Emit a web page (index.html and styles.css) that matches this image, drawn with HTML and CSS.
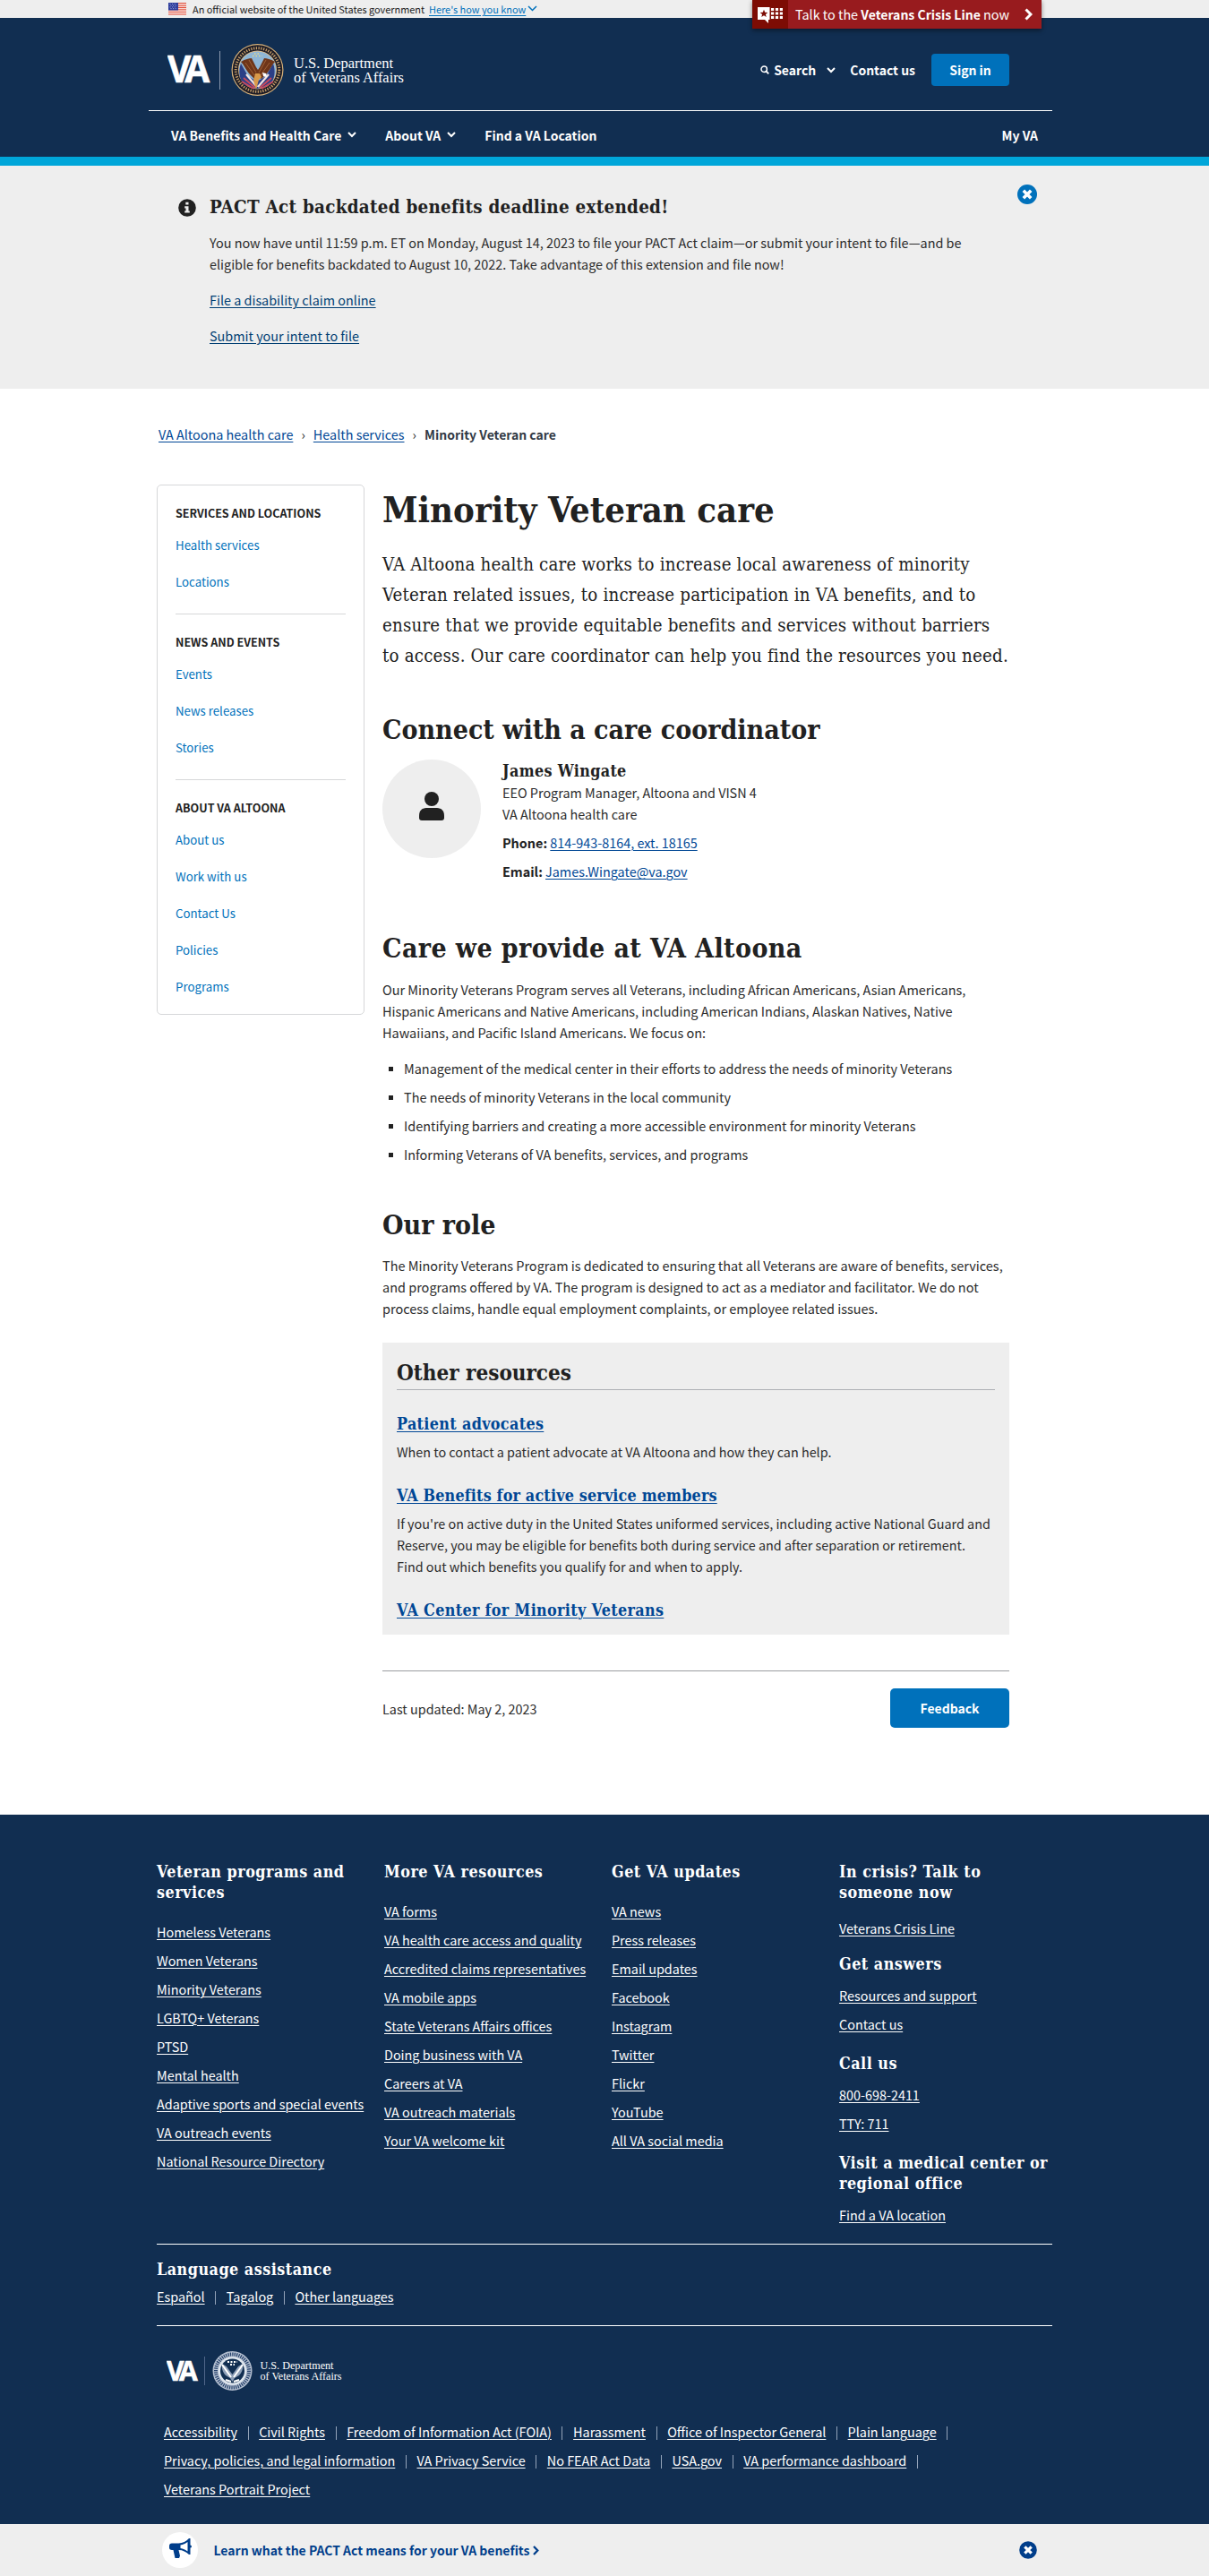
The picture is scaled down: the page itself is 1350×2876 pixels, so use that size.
FILE: index.html
```html
<!DOCTYPE html>
<html lang="en">
<head>
<meta charset="utf-8">
<title>Minority Veteran care | VA Altoona health care</title>
<link rel="stylesheet" href="styles.css">
</head>
<body>
<div class="gov-banner">
  <div class="gov-inner">
    <svg class="flag" width="20" height="14" viewBox="0 0 20 14"><rect width="20" height="14" fill="#fff"/><path d="M0 .7h20M0 3.1h20M0 5.5h20M0 7.9h20M0 10.3h20M0 12.9h20" stroke="#e0523e" stroke-width="1.3"/><rect width="11" height="8.5" fill="#2b3a9b"/><path d="M1.5 1.5h8M2.5 3.2h8M1.5 4.9h8M2.5 6.6h8" stroke="#c3c8ee" stroke-width=".8" stroke-dasharray="1 1.6"/></svg>
    <span class="gov-text">An official website of the United States government</span>
    <a class="gov-link" href="#">Here's how you know</a>
    <svg width="11" height="7" viewBox="0 0 11 7"><path d="M1 1l4.5 4.5L10 1" fill="none" stroke="#0071bb" stroke-width="1.5"/></svg>
  </div>
  <a class="crisis" href="#">
    <span class="crisis-icon">
      <svg width="28" height="18" viewBox="0 0 28 18"><path d="M0 0h13.500v14h-1.500v4l-4-4H0z" fill="#fff"/><path d="M7 2.800l1.200 2.900 3.100.2-2.400 2 .8 3L7 9.300l-2.700 1.600.8-3-2.400-2 3.100-.2z" fill="#7d0c04"/><path d="M15 2.500h13M15 7h13M15 11.500h13" stroke="#fff" stroke-width="3.200" stroke-dasharray="3.200 1.700"/></svg>
    </span>
    <span class="crisis-text">Talk to the <b>Veterans Crisis Line</b> now</span>
    <svg width="9" height="14" viewBox="0 0 9 14"><path d="M1.500 1.500L7 7l-5.500 5.500" fill="none" stroke="#fff" stroke-width="3"/></svg>
  </a>
</div>
<header class="header">
  <div class="header-top">
    <svg class="logo" width="266" height="60" viewBox="0 0 266 60">
      <text x="0" y="43.500" class="logo-va" font-size="40.500" letter-spacing="-7">VA</text>
      <path d="M58.500 9v43" stroke="#8c9bb0"/>
      <circle cx="100.500" cy="30" r="29" fill="#d8b27a"/><circle cx="100.500" cy="30" r="27.800" fill="#1d1c26"/>
      <circle cx="100.500" cy="30" r="24.300" fill="none" stroke="#c9a06a" stroke-width="3" stroke-dasharray="1.300 1.500"/>
      <circle cx="100.500" cy="30" r="21.500" fill="#d9b98a"/><circle cx="100.500" cy="30" r="20.600" fill="#8fb6d6"/>
      <path d="M82 23c-3 8-2 18 4 24l14 4 14-4c6-6 7-16 4-24l-8 14-10 6-10-6z" fill="#2c3f86"/>
      <path d="M85 39l13 11M83 43l13 8M116 39l-13 11M118 43l-13 8" stroke="#c94a5c" stroke-width="2"/>
      <path d="M88 35l12 14M113 35l-12 14" stroke="#f3e3df" stroke-width="2.200"/>
      <path d="M82 21c5-3 9-4 12-4l5 10 2 3 2-3 5-10c3 0 7 1 12 4-3 3-5 8-9 13l-6 6-4-2-4 2-6-6c-4-5-6-10-9-13z" fill="#6e3519"/>
      <path d="M87 22l10 14M91 19l8 14M114 22l-10 14M110 19l-8 14" stroke="#a5673b" stroke-width=".9"/>
      <path d="M98 34l5 0 2 4-3 3-3 11-3-10z" fill="#d99a4a"/>
      <path d="M106 33l4 1 1 4-4-1z" fill="#fff"/>
      <path d="M95 14.500h11M97 12h7" stroke="#e6d88a" stroke-width="1.600" stroke-dasharray="1.500 2"/>
      <text x="141" y="27.500" class="logo-name" font-size="16.500" textLength="111" lengthAdjust="spacingAndGlyphs">U.S. Department</text>
      <text x="141" y="44" class="logo-name" font-size="16.500" textLength="123" lengthAdjust="spacingAndGlyphs">of Veterans Affairs</text>
    </svg>
    <div class="header-tools">
      <svg width="10" height="10" viewBox="0 0 10 10"><circle cx="4.200" cy="4.200" r="3.200" fill="none" stroke="#fff" stroke-width="1.500"/><path d="M6.500 6.500L9.300 9.300" stroke="#fff" stroke-width="1.800"/></svg>
      <a class="search" href="#">Search</a>
      <svg class="tool-chev" width="10" height="7" viewBox="0 0 10 7"><path d="M1 1l4 4 4-4" fill="none" stroke="#fff" stroke-width="2"/></svg>
      <a class="contact" href="#">Contact us</a>
      <a class="sign-in" href="#">Sign in</a>
    </div>
  </div>
  <nav class="nav">
    <a href="#">VA Benefits and Health Care</a>
    <svg width="10" height="7" viewBox="0 0 10 7"><path d="M1 1l4 4 4-4" fill="none" stroke="#fff" stroke-width="2"/></svg>
    <a class="nav-about" href="#">About VA</a>
    <svg width="10" height="7" viewBox="0 0 10 7"><path d="M1 1l4 4 4-4" fill="none" stroke="#fff" stroke-width="2"/></svg>
    <a class="nav-find" href="#">Find a VA Location</a>
    <a class="nav-my" href="#">My VA</a>
  </nav>
</header>

<section class="alert">
  <svg class="alert-icon" width="20" height="20" viewBox="0 0 20 20"><circle cx="10" cy="10" r="9.800" fill="#212121"/><path d="M8.300 3.800h3.200v2.800H8.300zM7.200 8.200h4.300v5.200h1.300v2.200H7.200v-2.200h1.300v-3H7.200z" fill="#eee"/></svg>
  <div class="alert-body">
    <h2>PACT Act backdated benefits deadline extended!</h2>
    <p>You now have until 11:59 p.m. ET on Monday, August 14, 2023 to file your PACT Act claim—or submit your intent to file—and be eligible for benefits backdated to August 10, 2022. Take advantage of this extension and file now!</p>
    <p><a href="#">File a disability claim online</a></p>
    <p><a href="#">Submit your intent to file</a></p>
  </div>
  <svg class="alert-close" width="22" height="22" viewBox="0 0 22 22"><circle cx="11" cy="11" r="11" fill="#0071bb"/><path d="M6.800 6.800l8.400 8.400M15.200 6.800l-8.400 8.400" stroke="#fff" stroke-width="3.600"/></svg>
</section>

<div class="page">
  <nav class="crumbs"><a href="#">VA Altoona health care</a><i>›</i><a href="#">Health services</a><i>›</i><b>Minority Veteran care</b></nav>
  <div class="columns">
    <aside class="side">
      <h3>Services and locations</h3>
      <ul><li><a href="#">Health services</a></li><li><a href="#">Locations</a></li></ul>
      <h3>News and events</h3>
      <ul><li><a href="#">Events</a></li><li><a href="#">News releases</a></li><li><a href="#">Stories</a></li></ul>
      <h3>About VA Altoona</h3>
      <ul><li><a href="#">About us</a></li><li><a href="#">Work with us</a></li><li><a href="#">Contact Us</a></li><li><a href="#">Policies</a></li><li><a href="#">Programs</a></li></ul>
    </aside>
    <main class="content">
      <h1>Minority Veteran care</h1>
      <p class="intro">VA Altoona health care works to increase local awareness of minority Veteran related issues, to increase participation in VA benefits, and to ensure that we provide equitable benefits and services without barriers<br>to access. Our care coordinator can help you find the resources you need.</p>
      <h2 class="h-connect">Connect with a care coordinator</h2>
      <div class="person">
        <div class="avatar"><svg width="28" height="32" viewBox="0 0 28 32"><circle cx="14" cy="8" r="8" fill="#212121"/><path d="M8 18h12c5 0 8 3.500 8 8.500V29c0 2-1 3-3 3H3c-2 0-3-1-3-3v-2.500C0 21.500 3 18 8 18z" fill="#212121"/></svg></div>
        <div class="person-info">
          <h3 class="name">James Wingate</h3>
          <p>EEO Program Manager, Altoona and VISN 4</p>
          <p>VA Altoona health care</p>
          <p class="reach"><b>Phone:</b> <a href="#">814-943-8164, ext. 18165</a></p>
          <p class="reach"><b>Email:</b> <a href="#">James.Wingate@va.gov</a></p>
        </div>
      </div>
      <h2 class="h-care">Care we provide at VA Altoona</h2>
      <p class="copy">Our Minority Veterans Program serves all Veterans, including African Americans, Asian Americans, Hispanic Americans and Native Americans, including American Indians, Alaskan Natives, Native<br>Hawaiians, and Pacific Island Americans. We focus on:</p>
      <ul class="focus">
        <li>Management of the medical center in their efforts to address the needs of minority Veterans</li>
        <li>The needs of minority Veterans in the local community</li>
        <li>Identifying barriers and creating a more accessible environment for minority Veterans</li>
        <li>Informing Veterans of VA benefits, services, and programs</li>
      </ul>
      <h2 class="h-role">Our role</h2>
      <p class="copy">The Minority Veterans Program is dedicated to ensuring that all Veterans are aware of benefits, services, and programs offered by VA. The program is designed to act as a mediator and facilitator. We do not<br>process claims, handle equal employment complaints, or employee related issues.</p>
      <section class="resources">
        <h2>Other resources</h2>
        <h3><a href="#">Patient advocates</a></h3>
        <p>When to contact a patient advocate at VA Altoona and how they can help.</p>
        <h3 class="tight"><a href="#">VA Benefits for active service members</a></h3>
        <p>If you're on active duty in the United States uniformed services, including active National Guard and Reserve, you may be eligible for benefits both during service and after separation or retirement.<br>Find out which benefits you qualify for and when to apply.</p>
        <h3><a href="#">VA Center for Minority Veterans</a></h3>
      </section>
      <div class="updated"><span>Last updated: May 2, 2023</span><a class="feedback" href="#">Feedback</a></div>
    </main>
  </div>
</div>

<footer class="footer">
  <div class="footer-inner">
    <div class="footer-cols">
      <div><h3>Veteran programs and services</h3>
        <ul><li><a href="#">Homeless Veterans</a></li><li><a href="#">Women Veterans</a></li><li><a href="#">Minority Veterans</a></li><li><a href="#">LGBTQ+ Veterans</a></li><li><a href="#">PTSD</a></li><li><a href="#">Mental health</a></li><li><a href="#">Adaptive sports and special events</a></li><li><a href="#">VA outreach events</a></li><li><a href="#">National Resource Directory</a></li></ul></div>
      <div><h3>More VA resources</h3>
        <ul><li><a href="#">VA forms</a></li><li><a href="#">VA health care access and quality</a></li><li><a href="#">Accredited claims representatives</a></li><li><a href="#">VA mobile apps</a></li><li><a href="#">State Veterans Affairs offices</a></li><li><a href="#">Doing business with VA</a></li><li><a href="#">Careers at VA</a></li><li><a href="#">VA outreach materials</a></li><li><a href="#">Your VA welcome kit</a></li></ul></div>
      <div><h3>Get VA updates</h3>
        <ul><li><a href="#">VA news</a></li><li><a href="#">Press releases</a></li><li><a href="#">Email updates</a></li><li><a href="#">Facebook</a></li><li><a href="#">Instagram</a></li><li><a href="#">Twitter</a></li><li><a href="#">Flickr</a></li><li><a href="#">YouTube</a></li><li><a href="#">All VA social media</a></li></ul></div>
      <div class="help"><h3>In crisis? Talk to someone now</h3>
        <ul class="help-first"><li><a href="#">Veterans Crisis Line</a></li></ul>
        <h3>Get answers</h3>
        <ul><li><a href="#">Resources and support</a></li><li><a href="#">Contact us</a></li></ul>
        <h3>Call us</h3>
        <ul><li><a href="#">800-698-2411</a></li><li><a href="#">TTY: 711</a></li></ul>
        <h3>Visit a medical center or regional office</h3>
        <ul><li><a href="#">Find a VA location</a></li></ul></div>
    </div>
    <div class="language">
      <h3>Language assistance</h3>
      <ul class="piped"><li><a href="#">Español</a></li><li><a href="#">Tagalog</a></li><li><a href="#">Other languages</a></li></ul>
    </div>
    <svg class="footer-logo" width="200" height="46" viewBox="0 0 200 46">
      <text x="0" y="33.500" class="logo-va" font-size="30" letter-spacing="-5.400">VA</text>
      <path d="M42.500 7v32" stroke="#51678a"/>
      <circle cx="73.500" cy="23" r="22" fill="#b4bfd0"/><circle cx="73.500" cy="23" r="18.500" fill="none" stroke="#24406a" stroke-width="4" stroke-dasharray="1.200 1.200"/>
      <circle cx="73.500" cy="23" r="15.800" fill="#dfe6ee"/><circle cx="73.500" cy="23" r="13.500" fill="#112e51"/>
      <path d="M62 15l5 3 5 7 1.500 2 1.500-2 5-7 5-3c1 5-1 10-4 13l-5 3-2.500 4-2.500-4-5-3c-3-3-5-8-4-13z" fill="#8fa0b8"/>
      <path d="M62 16l10 14M85 16L75 30M66 33l6 2M81 33l-6 2" stroke="#fff" stroke-width="2"/>
      <path d="M68 13h11M71 16h5" stroke="#fff" stroke-width="2" stroke-dasharray="2 1.500"/>
      <text x="104.500" y="20.500" class="logo-name" font-size="12.300" textLength="82" lengthAdjust="spacingAndGlyphs">U.S. Department</text>
      <text x="104.500" y="33" class="logo-name" font-size="12.300" textLength="91" lengthAdjust="spacingAndGlyphs">of Veterans Affairs</text>
    </svg>
    <ul class="piped legal"><li><a href="#">Accessibility</a></li><li><a href="#">Civil Rights</a></li><li><a href="#">Freedom of Information Act (FOIA)</a></li><li><a href="#">Harassment</a></li><li><a href="#">Office of Inspector General</a></li><li><a href="#">Plain language</a></li><li><a href="#">Privacy, policies, and legal information</a></li><li><a href="#">VA Privacy Service</a></li><li><a href="#">No FEAR Act Data</a></li><li><a href="#">USA.gov</a></li><li><a href="#">VA performance dashboard</a></li><li><a href="#">Veterans Portrait Project</a></li></ul>
  </div>
</footer>
<div class="promo">
  <div class="promo-inner">
    <span class="promo-icon"><svg width="25" height="23" viewBox="0 0 25 23"><path d="M0 8.500c0-2 1-3 3-3h7.500C15 5.500 19 3 22 0h1.500v18H22c-3-3-7-5-11.500-5L12 19.500 11 22H6.500L4.500 13H3c-2 0-3-1-3-2.500z" fill="#003e8b"/><path d="M12.500 7.500c3-.5 5.500-1.800 8-3.500v10.500c-2.500-1.800-5-3-8-3.500z" fill="#fff"/><circle cx="23.500" cy="9" r="1.500" fill="#003e8b"/></svg></span>
    <a href="#">Learn what the PACT Act means for your VA benefits</a>
    <svg class="promo-chev" width="7" height="11" viewBox="0 0 7 11"><path d="M1 1l4.300 4.500L1 10" fill="none" stroke="#003e8b" stroke-width="2.300"/></svg>
    <svg class="promo-close" width="20" height="20" viewBox="0 0 20 20"><circle cx="10" cy="10" r="9.800" fill="#003e8b"/><path d="M6.300 6.300l7.400 7.400M13.700 6.300l-7.400 7.400" stroke="#fff" stroke-width="3.200"/></svg>
  </div>
</div>
</body>
</html>
```
FILE: styles.css
```css
* { box-sizing: border-box; }
body {
  margin: 0;
  background: #fff;
  color: #2b2b2b;
  font: 14.4px/24px "Noto Sans CJK SC", "Noto Sans", sans-serif;
}
h1, h2, h3, p, ul { margin: 0; padding: 0; }
h1, h2, h3 { font-family: "DejaVu Serif Condensed", "DejaVu Serif", serif; font-weight: 700; color: #212121; }
ul { list-style: none; }
b { font-size: 13.97px; font-weight: 700; color: #212121; }
a { color: #004795; text-decoration: underline; text-decoration-thickness: 1px; text-underline-offset: 1.5px; }
svg { display: block; flex: none; }

/* Government banner */
.gov-banner { position: relative; height: 20px; background: #eee; }
.gov-inner { width: 1000px; height: 19px; margin: 0 auto; padding-left: 13px; display: flex; align-items: center; line-height: 18px; }
.gov-text { margin-left: 7px; width: 259px; font-size: 10.93px; color: #212121; white-space: nowrap; }
.gov-link { margin: 0 2px 0 5px; font-size: 10.93px; color: #0071bb; white-space: nowrap; }
.crisis { position: absolute; top: 0; left: 840px; width: 323px; height: 32px; display: flex; align-items: center; background: #981b1e; color: #fff; text-decoration: none; box-shadow: 0 2px 5px rgba(0,0,0,.45); z-index: 1; }
.crisis-icon { width: 40px; height: 32px; padding: 8px 0 0 6px; background: #7d0c04; }
.crisis-text { width: 264px; padding-left: 8px; line-height: 33px; white-space: nowrap; }
.crisis-text b { color: #fff; font-size: 14px; }

/* Header */
.header { height: 165px; padding-left: 166px; background: #112e51; border-bottom: 10px solid #00a6d9; }
.header-top { width: 1009px; height: 104px; padding: 27.500px 48px 0 21px; display: flex; justify-content: space-between; border-bottom: 1px solid #fff; }
.logo-va { font-family: "Open Sans", sans-serif; font-weight: 700; fill: #fff; stroke: #fff; stroke-width: .6px; }
.logo-name { font-family: "Liberation Serif", serif; fill: #fff; }
.header-tools { height: 36px; margin-top: 12.500px; display: flex; align-items: center; font-size: 13.970px; font-weight: 700; }
.header-tools a { color: #fff; text-decoration: none; }
.header-tools .search { margin: 0 12px 0 5px; }
.header-tools .contact { margin: 0 18px 0 16px; }
.sign-in { width: 87px; height: 36px; border-radius: 4px; background: #0071bb; text-align: center; line-height: 36px; }
.nav { width: 1009px; height: 51px; padding: 2px 16px 0 25px; display: flex; align-items: center; font-size: 13.970px; font-weight: 700; }
.nav a { color: #fff; text-decoration: none; }
.nav svg { margin-left: 7px; }
.nav .nav-about { margin-left: 32px; }
.nav .nav-find { margin-left: 32px; }
.nav .nav-my { margin-left: auto; }

/* Alert */
.alert { height: 249px; padding: 33px 192px 0 199px; display: flex; align-items: flex-start; background: #eee; }
.alert-icon { margin: 4px 15px 0 0; }
.alert-body { width: 860px; }
.alert-body h2 { font-size: 20.400px; line-height: 26px; letter-spacing: .28px; margin-bottom: 15px; }
.alert-body p { margin-bottom: 16px; }
.alert-body a { color: #003e73; }
.alert-close { margin: -12px 0 0 auto; }

/* Page */
.page { width: 1000px; margin: 0 auto; padding-top: 39px; }
.crumbs { display: flex; padding-left: 2px; }
.crumbs i { width: 22.500px; text-align: center; font-style: normal; }
.crumbs b { color: #323a45; }
.columns { display: flex; align-items: flex-start; gap: 20px; margin-top: 44px; }
.side { width: 232px; padding: 21px 20px 10px; border: 1px solid #d6d7d9; border-radius: 5px; }
.side h3 { margin-bottom: 5px; font: 700 12.550px/20px "Noto Sans CJK SC", "Noto Sans", sans-serif; text-transform: uppercase; }
.side ul { margin-bottom: 15px; }
.side ul + h3 { border-top: 1px solid #d6d7d9; padding-top: 21px; }
.side ul:last-child { margin-bottom: 0; }
.side li { font-size: 13.250px; line-height: 41px; }
.side a { color: #0071bb; text-decoration: none; }

.content { width: 700px; padding-top: 4px; }
.content h1 { font-size: 39.700px; line-height: 48px; margin-bottom: 20px; }
.content .intro { font: 20.300px/34px "DejaVu Serif Condensed", "DejaVu Serif", serif; letter-spacing: .19px; color: #212121; margin-right: -4px; }
.content h2 { font-size: 30px; line-height: 38px; }
.h-connect { margin: 47px 0 14px; }
.content .h-care { margin: 55px 0 15px; letter-spacing: .4px; }
.content .h-role { margin: 47.500px 0 14.500px; }
.copy { margin-right: -8px; font-size: 14.470px; }
.person { display: flex; gap: 24px; }
.person b { font-size: 14.400px; }
.avatar { width: 110px; height: 110px; border-radius: 50%; background: #eee; display: flex; align-items: center; justify-content: center; padding-bottom: 6px; }
.person-info { padding-top: 1px; }
.content h3 { font-size: 17.800px; line-height: 24px; letter-spacing: .35px; }
.content h3.tight { letter-spacing: .18px; }
.reach { margin-top: 8px; }
.focus { display: grid; gap: 8px; margin-top: 16px; font-size: 14.440px; }
.focus li { display: flex; align-items: center; padding-left: 7px; gap: 12px; }
.focus li::before { content: ""; width: 5px; height: 5px; background: #212121; }
.resources { margin-top: 26px; padding: 19px 16px 14.500px; background: #eee; }
.resources h2 { font-size: 24px; line-height: 30px; padding-bottom: 3px; border-bottom: 1px solid #aeb0b5; margin-bottom: 26px; }
.resources p { margin: 6.500px -8px 25.500px 0; font-size: 14.360px; }
.updated { height: 161px; margin-top: 40.500px; padding-top: 19px; border-top: 1px solid #9a9ca0; display: flex; justify-content: space-between; line-height: 46px; }
.feedback { width: 133px; height: 44px; border-radius: 5px; background: #0071bb; color: #fff; font-size: 13.970px; font-weight: 700; text-align: center; text-decoration: none; line-height: 44px; }

/* Footer */
.footer { height: 792px; padding-top: 52px; background: #112e51; }
.footer h3 { color: #fff; font-size: 17.800px; line-height: 23px; letter-spacing: .5px; }
.footer a { color: #fff; }
.footer-inner { width: 1000px; margin: 0 auto; }
.footer-cols { height: 428px; display: grid; grid-template-columns: repeat(3, 254px) 238px; border-bottom: 1px solid #fff; }
.footer-cols > div > h3:first-child { width: 238px; }
.footer-cols ul { display: grid; gap: 8px; margin-top: 21px; }
.help ul { margin: 12px 0 20px; }
.help ul.help-first { margin: 17px 0 16px; }
.language { height: 91px; padding-top: 16px; border-bottom: 1px solid #fff; }
.piped { display: flex; flex-wrap: wrap; margin-top: 7px; row-gap: 8px; }
.piped li { display: flex; align-items: center; }
.piped li:not(:last-child)::after { content: ""; width: 1px; height: 15px; margin: 2px 11.600px 0; background: #93a3b9; }
.footer-logo { margin: 27px 0 0 11px; }
.legal { margin-top: 33px; padding-left: 8px; }

/* Bottom promo bar */
.promo { height: 58px; background: #eee; }
.promo-inner { width: 1000px; height: 58px; margin: 0 auto; padding: 0 17px 0 6px; display: flex; align-items: center; font-size: 13.970px; font-weight: 700; }
.promo-icon { width: 40px; height: 40px; margin-right: 17.500px; border-radius: 50%; background: #fff; display: flex; align-items: center; justify-content: center; padding-bottom: 4px; }
.promo a { color: #003e8b; text-decoration: none; }
.promo-chev { margin-left: 4px; }
.promo-close { margin: 0 0 0 auto; }
```
